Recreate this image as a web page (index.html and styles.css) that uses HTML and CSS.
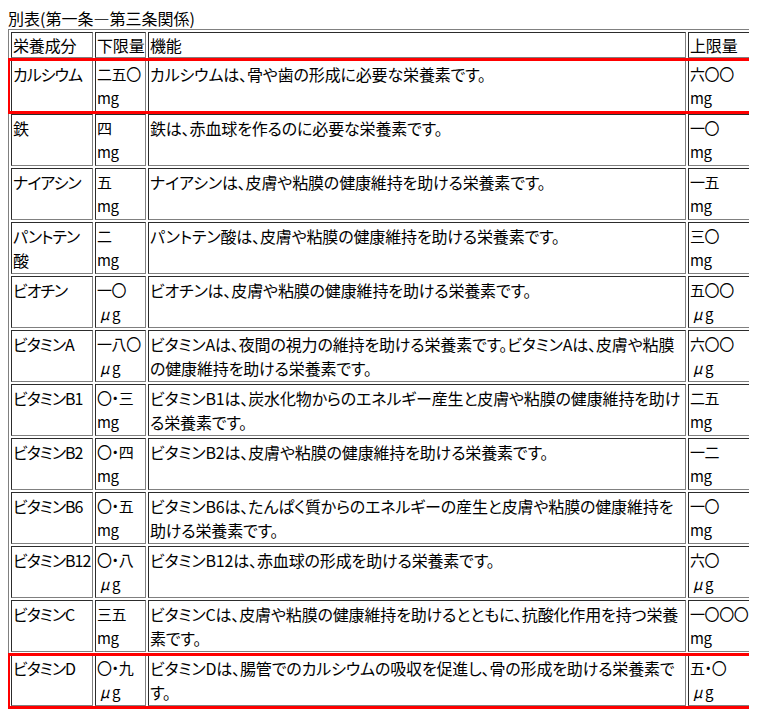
FILE: index.html
```html
<!DOCTYPE html>
<html lang="ja">
<head>
<meta charset="utf-8">
<title>別表</title>
<link rel="stylesheet" href="styles.css">
</head>
<body>
<div class="sheet">
  <p class="caption">別表(第一条―第三条関係)</p>
  <table class="nutrients">
    <tr class="head">
      <td class="c-name">栄養成分</td>
      <td class="c-min">下限量</td>
      <td class="c-func">機能</td>
      <td class="c-max">上限量</td>
    </tr>
    <tr>
      <td class="name">カルシウム</td>
      <td class="amt">二五〇<br>mg</td>
      <td>カルシウムは、骨や歯の形成に必要な栄養素です。</td>
      <td class="amt">六〇〇<br>mg</td>
    </tr>
    <tr>
      <td class="name">鉄</td>
      <td class="amt">四<br>mg</td>
      <td>鉄は、赤血球を作るのに必要な栄養素です。</td>
      <td class="amt">一〇<br>mg</td>
    </tr>
    <tr>
      <td class="name">ナイアシン</td>
      <td class="amt">五<br>mg</td>
      <td>ナイアシンは、皮膚や粘膜の健康維持を助ける栄養素です。</td>
      <td class="amt">一五<br>mg</td>
    </tr>
    <tr>
      <td class="name">パントテン<br>酸</td>
      <td class="amt">二<br>mg</td>
      <td>パントテン酸は、皮膚や粘膜の健康維持を助ける栄養素です。</td>
      <td class="amt">三〇<br>mg</td>
    </tr>
    <tr>
      <td class="name">ビオチン</td>
      <td class="amt">一〇<br><span class="mu">μ</span>g</td>
      <td>ビオチンは、皮膚や粘膜の健康維持を助ける栄養素です。</td>
      <td class="amt">五〇〇<br><span class="mu">μ</span>g</td>
    </tr>
    <tr>
      <td class="name">ビタミンA</td>
      <td class="amt">一八〇<br><span class="mu">μ</span>g</td>
      <td>ビタミンAは、夜間の視力の維持を助ける栄養素です。ビタミンAは、皮膚や粘膜の健康維持を助ける栄養素です。</td>
      <td class="amt">六〇〇<br><span class="mu">μ</span>g</td>
    </tr>
    <tr>
      <td class="name">ビタミンB1</td>
      <td class="amt">〇・三<br>mg</td>
      <td>ビタミンB1は、炭水化物からのエネルギー産生と皮膚や粘膜の健康維持を助ける栄養素です。</td>
      <td class="amt">二五<br>mg</td>
    </tr>
    <tr>
      <td class="name">ビタミンB2</td>
      <td class="amt">〇・四<br>mg</td>
      <td>ビタミンB2は、皮膚や粘膜の健康維持を助ける栄養素です。</td>
      <td class="amt">一二<br>mg</td>
    </tr>
    <tr>
      <td class="name">ビタミンB6</td>
      <td class="amt">〇・五<br>mg</td>
      <td>ビタミンB6は、たんぱく質からのエネルギーの産生と皮膚や粘膜の健康維持を助ける栄養素です。</td>
      <td class="amt">一〇<br>mg</td>
    </tr>
    <tr>
      <td class="name">ビタミンB12</td>
      <td class="amt">〇・八<br><span class="mu">μ</span>g</td>
      <td>ビタミンB12は、赤血球の形成を助ける栄養素です。</td>
      <td class="amt">六〇<br><span class="mu">μ</span>g</td>
    </tr>
    <tr>
      <td class="name">ビタミンC</td>
      <td class="amt">三五<br>mg</td>
      <td>ビタミンCは、皮膚や粘膜の健康維持を助けるとともに、抗酸化作用を持つ栄養素です。</td>
      <td class="amt">一〇〇〇<br>mg</td>
    </tr>
    <tr>
      <td class="name">ビタミンD</td>
      <td class="amt">〇・九<br><span class="mu">μ</span>g</td>
      <td>ビタミンDは、腸管でのカルシウムの吸収を促進し、骨の形成を助ける栄養素です。</td>
      <td class="amt">五・〇<br><span class="mu">μ</span>g</td>
    </tr>
  </table>
  <div class="mark mark-first"></div>
  <div class="mark mark-last"></div>
</div>
</body>
</html>
```

FILE: styles.css
```css
html {
  overflow: hidden;
  background: #ffffff;
}

body {
  margin: 8px;
  font-family: "Noto Sans CJK JP", "Noto Sans", sans-serif;
  font-size: 16px;
  color: #000000;
  font-feature-settings: "palt";
}

.sheet {
  position: relative;
}

.caption {
  margin: 0;
  line-height: 21px;
}

.nutrients {
  width: 754px;
  table-layout: fixed;
  border-collapse: separate;
  border-spacing: 2px;
  border: 1px outset #808080;
  letter-spacing: -0.15px;
}

.nutrients td {
  box-sizing: border-box;
  border: 1px inset #808080;
  padding: 1px;
  vertical-align: top;
  line-height: 24px;
}

.nutrients .head td {
  line-height: 22px;
  white-space: nowrap;
}

.c-name { width: 82px; }
.c-min { width: 51px; }
.c-func { width: 538px; }
.c-max { width: 71px; }

.nutrients .name {
  white-space: nowrap;
  letter-spacing: -1px;
}

.nutrients .amt {
  white-space: nowrap;
  font-size: 15px;
  letter-spacing: -0.4px;
}

.mu {
  font-style: italic;
  padding: 0 3px 0 3px;
}

.mark {
  position: absolute;
  left: -1px;
  height: 56px;
  border: 3px solid #ff0000;
  box-sizing: border-box;
}

.mark-first {
  top: 50px;
  width: 780px;
}

.mark-last {
  top: 645px;
  width: 750px;
}
```
